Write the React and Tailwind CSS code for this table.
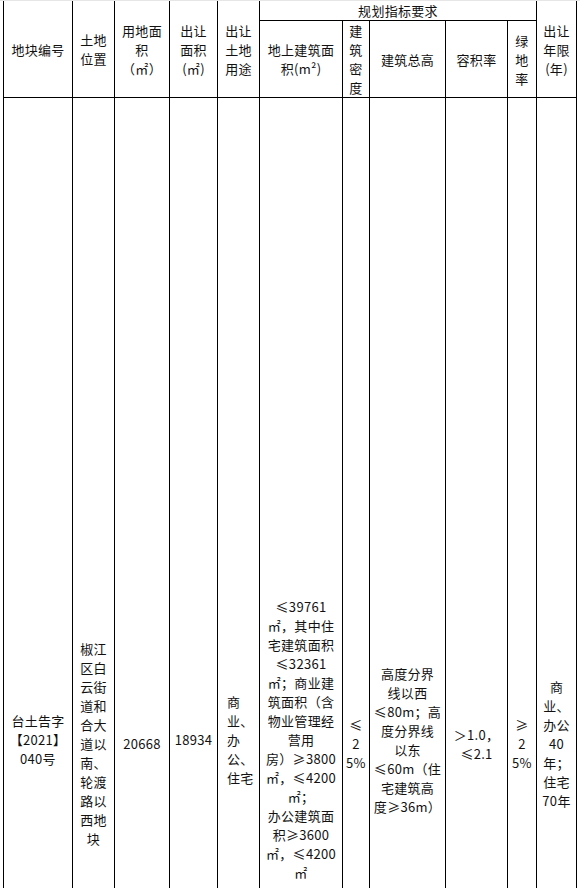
import React from 'react';

const cell = "border border-black p-0 align-middle text-center";

function Lines({ lines, className = "" }) {
  return (
    <div className={className}>
      {lines.map((t, i) => (
        <div key={i}>{t}</div>
      ))}
    </div>
  );
}

export default function App() {
  const widths = [69, 42, 55, 48, 42, 83, 27, 76, 62, 29, 40];

  return (
    <div className="h-[888px] w-[580px] overflow-hidden bg-white border-t border-[#e6e6e6] font-['Noto_Sans_CJK_SC',sans-serif] text-[13px] leading-[19px] tracking-[0.3px] text-[#111]">
      <table className="ml-[3px] w-[573px] table-fixed border-collapse">
        <colgroup>
          {widths.map((w, i) => (
            <col key={i} style={{ width: w }} />
          ))}
        </colgroup>
        <tbody>
          <tr className="h-[18px]">
            <td rowSpan={2} className={cell + " border-t-0"}>地块编号</td>
            <td rowSpan={2} className={cell + " border-t-0"}>
              <Lines lines={["土地", "位置"]} />
            </td>
            <td rowSpan={2} className={cell + " border-t-0"}>
              <Lines lines={["用地面", "积", "（㎡）"]} />
            </td>
            <td rowSpan={2} className={cell + " border-t-0"}>
              <Lines lines={["出让", "面积", "(㎡)"]} />
            </td>
            <td rowSpan={2} className={cell + " border-t-0"}>
              <Lines lines={["出让", "土地", "用途"]} />
            </td>
            <td colSpan={5} className={cell + " border-t-0"}>规划指标要求</td>
            <td rowSpan={2} className={cell + " border-t-0"}>
              <Lines lines={["出让", "年限", "(年)"]} />
            </td>
          </tr>
          <tr className="h-[77px]">
            <td className={cell}>
              <Lines lines={["地上建筑面", "积(m²)"]} />
            </td>
            <td className={cell}>
              <Lines lines={["建", "筑", "密", "度"]} />
            </td>
            <td className={cell}>建筑总高</td>
            <td className={cell}>容积率</td>
            <td className={cell}>
              <Lines lines={["绿", "地", "率"]} />
            </td>
          </tr>
          <tr className="h-[1284px]">
            <td className={cell}>
              <Lines lines={["台土告字", "【2021】", "040号"]} />
            </td>
            <td className={cell}>
              <Lines
                className="pt-[8px]"
                lines={["椒江", "区白", "云街", "道和", "合大", "道以", "南、", "轮渡", "路以", "西地", "块"]}
              />
            </td>
            <td className={cell}>
              <div className="pt-[8px]">20668</div>
            </td>
            <td className={cell}>18934</td>
            <td className={cell + " text-left pl-[9px]"}>
              <Lines lines={["商", "业、", "办", "公、", "住宅"]} />
            </td>
            <td className={cell}>
              <Lines
                lines={[
                  "≤39761",
                  "㎡，其中住",
                  "宅建筑面积",
                  "≤32361",
                  "㎡；商业建",
                  "筑面积（含",
                  "物业管理经",
                  "营用",
                  "房）≥3800",
                  "㎡，≤4200",
                  "㎡；",
                  "办公建筑面",
                  "积≥3600",
                  "㎡，≤4200",
                  "㎡",
                ]}
              />
            </td>
            <td className={cell}>
              <Lines className="pt-[8px]" lines={["≤", "2", "5%"]} />
            </td>
            <td className={cell}>
              <Lines
                lines={[
                  "高度分界",
                  "线以西",
                  "≤80m；高",
                  "度分界线",
                  "以东",
                  "≤60m（住",
                  "宅建筑高",
                  "度≥36m）",
                ]}
              />
            </td>
            <td className={cell}>
              <Lines className="pt-[8px]" lines={["＞1.0，", "≤2.1"]} />
            </td>
            <td className={cell}>
              <Lines className="pt-[8px]" lines={["≥", "2", "5%"]} />
            </td>
            <td className={cell}>
              <Lines className="pt-[8px]" lines={["商", "业、", "办公", "40", "年；", "住宅", "70年"]} />
            </td>
          </tr>
        </tbody>
      </table>
    </div>
  );
}
